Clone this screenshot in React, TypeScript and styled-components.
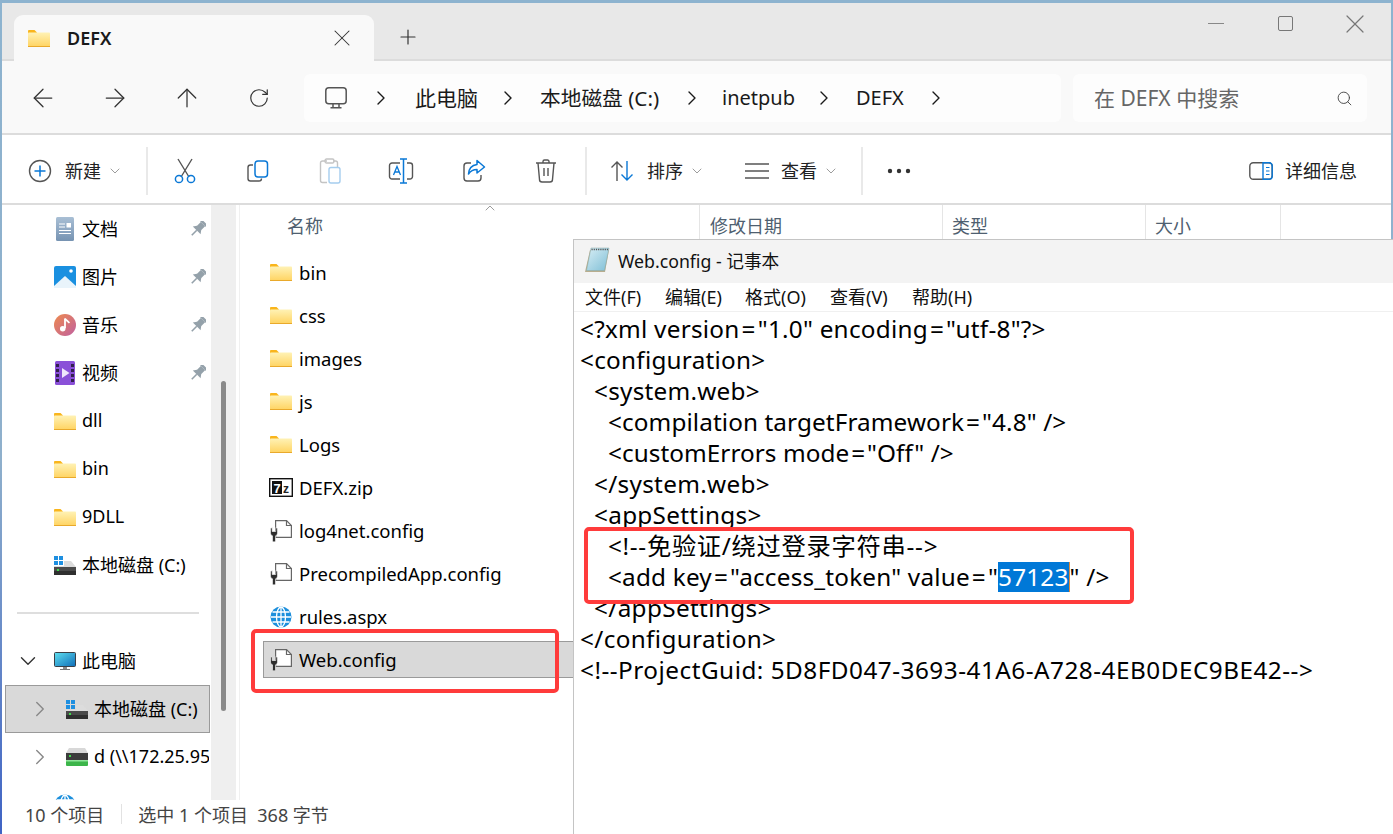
import React from "react";
import styled, { createGlobalStyle } from "styled-components";
import { ArrowLeft, ArrowRight, ArrowUp, RotateCw, ChevronRight, ChevronDown, ChevronUp, X, Plus, Search } from "lucide-react";

const GlobalStyle = createGlobalStyle`
  html, body { margin: 0; padding: 0; background: #fff; }
  body { font-family: "Noto Sans", "Noto Sans CJK SC", sans-serif; }
  * { box-sizing: border-box; }
`;

const Window = styled.div`
  position: relative;
  width: 1393px;
  height: 834px;
  overflow: hidden;
  padding: 3px 2px 0 2px;
  background: linear-gradient(180deg, #8db3cf 0%, #8fb0cc 55%, #3f63c4 100%);
`;
const Inner = styled.div`
  height: 831px;
  display: flex;
  flex-direction: column;
  background: #fff;
  color: #000;
`;
const TabBar = styled.div`
  height: 58px;
  flex: none;
  display: flex;
  align-items: flex-end;
  padding-left: 12px;
  background: #e8e8e8;
  border-bottom: 2px solid #dcdcdc;
`;
const Tab = styled.div`
  width: 360px;
  height: 46px;
  margin-bottom: -2px;
  display: flex;
  align-items: center;
  padding: 0 18px 0 14px;
  background: #f9f9f9;
  border-radius: 9px 9px 0 0;
  font-size: 18px;
  font-weight: 600;
  color: #1a1a1a;
`;
const TabTitle = styled.span`
  margin-left: 17px;
  flex: 1;
`;
const NewTab = styled.div`
  margin-left: 22px;
  height: 44px;
  display: flex;
  align-items: center;
  color: #333;
`;
const Caption = styled.div`
  margin-left: auto;
  height: 56px;
  display: flex;
  align-items: center;
  gap: 46px;
  padding: 0 20px 15px 0;
  color: #777;
`;
const MinLine = styled.div`
  width: 16px;
  height: 1px;
  margin-right: 8px;
  background: #888;
`;
const MaxBox = styled.div`
  width: 15px;
  height: 15px;
  border: 1.5px solid #777;
  border-radius: 2px;
`;
const AddressRow = styled.div`
  height: 74px;
  flex: none;
  display: flex;
  align-items: center;
  padding-top: 2px;
  background: #f9f9f9;
  border-bottom: 2px solid #dcdcdc;
  color: #333;
`;
const NavButtons = styled.div`
  width: 302px;
  display: flex;
  align-items: center;
  padding-left: 26px;
  gap: 42px;
`;
const AddressBox = styled.div`
  width: 757px;
  height: 48px;
  display: flex;
  align-items: center;
  padding-left: 21px;
  background: #fdfdfd;
  border-radius: 6px;
  color: #1a1a1a;
`;
const CrumbIcon = styled.span`
  width: 44px;
  flex: none;
  display: flex;
  align-items: center;
`;
const Crumb = styled.span<{ $w: number; $size?: number }>`
  width: ${(p) => p.$w}px;
  flex: none;
  padding-bottom: 2px;
  font-size: ${(p) => p.$size ?? 20}px;
  white-space: nowrap;
`;
const CrumbArrow = styled.span<{ $w: number }>`
  width: ${(p) => p.$w}px;
  flex: none;
  display: flex;
`;
const SearchBox = styled.div`
  width: 294px;
  height: 48px;
  margin-left: 12px;
  display: flex;
  align-items: center;
  justify-content: space-between;
  padding: 0 14px 0 21px;
  background: #fdfdfd;
  border-radius: 6px;
  font-size: 21px;
  color: #666;
`;
const SearchHint = styled.span`
  padding-bottom: 2px;
`;
const Toolbar = styled.div`
  height: 70px;
  flex: none;
  display: flex;
  align-items: center;
  padding-top: 4px;
  border-bottom: 2px solid #dcdcdc;
  font-size: 18px;
  color: #222;
`;
const ToolItem = styled.div<{ $w: number }>`
  width: ${(p) => p.$w}px;
  flex: none;
  display: flex;
  align-items: center;
`;
const IconSlot = styled.div<{ $w: number; $ml?: number }>`
  width: ${(p) => p.$w}px;
  margin-left: ${(p) => p.$ml ?? 0}px;
  flex: none;
  display: flex;
  justify-content: center;
`;
const ToolLabel = styled.span<{ $ml: number }>`
  margin-left: ${(p) => p.$ml}px;
  padding-bottom: 2px;
`;
const ToolSep = styled.div<{ $ml?: number }>`
  width: 2px;
  height: 48px;
  margin-left: ${(p) => p.$ml ?? 0}px;
  flex: none;
  background: #e9e9e9;
`;
const Caret = styled.span`
  margin-left: 6px;
  display: flex;
  color: #777;
`;
const Main = styled.div`
  flex: 1;
  min-height: 0;
  display: flex;
`;
const Sidebar = styled.div`
  width: 209px;
  flex: none;
  overflow: hidden;
  font-size: 18px;
`;
const SideRow = styled.div<{ $selected?: boolean }>`
  height: 48px;
  width: 205px;
  margin-left: 3px;
  display: flex;
  align-items: center;
  white-space: nowrap;
  overflow: hidden;
  background: ${(p) => (p.$selected ? "#d9d9d9" : "transparent")};
  border: 1px solid ${(p) => (p.$selected ? "#9a9a9a" : "transparent")};
`;
const ChevronSlot = styled.div<{ $depth: number }>`
  width: ${(p) => (p.$depth === 2 ? 60 : 48)}px;
  padding-left: ${(p) => (p.$depth === 2 ? 21 : 9)}px;
  flex: none;
  display: flex;
  color: #888;
`;
const SideIcon = styled.div`
  width: 22px;
  flex: none;
  display: flex;
  justify-content: center;
`;
const SideLabel = styled.span`
  margin-left: 6px;
  padding-bottom: 2px;
`;
const PinSlot = styled.div`
  margin-left: auto;
  padding-right: 3px;
  display: flex;
`;
const SideDivider = styled.div`
  height: 48px;
  display: flex;
  align-items: center;
  padding: 0 12px 0 15px;
  &::after {
    content: "";
    flex: 1;
    height: 2px;
    background: #dedede;
  }
`;
const ScrollTrack = styled.div`
  width: 25px;
  flex: none;
  padding: 176px 0 0 10px;
  background: #efefef;
`;
const ScrollThumb = styled.div`
  width: 5px;
  height: 330px;
  border-radius: 3px;
  background: #8a8a8a;
`;
const Content = styled.div`
  flex: 1;
  min-width: 0;
  margin-left: 3px;
  border-left: 1px solid #f0f0f0;
  overflow: hidden;
`;
const HeaderRow = styled.div`
  height: 35px;
  display: flex;
  font-size: 18px;
  color: #4f5f70;
`;
const HeaderCell = styled.div<{ $w: number; $pad: number }>`
  position: relative;
  width: ${(p) => p.$w}px;
  flex: none;
  padding-left: ${(p) => p.$pad}px;
  padding-top: 7px;
  border-right: 1px solid #e5e5e5;
`;
const SortMark = styled.div`
  position: absolute;
  left: 242px;
  top: -5px;
  display: flex;
  color: #777;
`;
const FileList = styled.div`
  display: flex;
  flex-direction: column;
  gap: 6px;
  padding: 14px 0 0 23px;
  font-size: 18.5px;
`;
const FileRow = styled.div<{ $selected?: boolean }>`
  height: 37px;
  display: flex;
  align-items: center;
  gap: 6px;
  padding-left: 5px;
  background: ${(p) => (p.$selected ? "#d9d9d9" : "transparent")};
  border: 1px solid ${(p) => (p.$selected ? "#9a9a9a" : "transparent")};
`;
const FileIcon = styled.div`
  width: 24px;
  flex: none;
  display: flex;
  justify-content: center;
`;
const StatusBar = styled.div`
  height: 34px;
  flex: none;
  display: flex;
  align-items: center;
  padding: 0 0 7px 23px;
  font-size: 18px;
  color: #444;
  white-space: pre;
`;
const StatusSep = styled.div`
  width: 1px;
  height: 20px;
  margin: 0 16px 0 17px;
  background: #e2e2e2;
`;
const Notepad = styled.div`
  position: absolute;
  left: 573px;
  top: 239px;
  width: 820px;
  height: 595px;
  display: flex;
  flex-direction: column;
  background: #fff;
  border-left: 1px solid #c4c4c4;
  border-top: 1px solid #c4c4c4;
`;
const NoteTitle = styled.div`
  height: 43px;
  flex: none;
  display: flex;
  align-items: center;
  gap: 8px;
  padding: 0 0 3px 10px;
  background: #f3f3f3;
  font-size: 17.7px;
  color: #111;
`;
const NoteMenu = styled.div`
  height: 29px;
  flex: none;
  display: flex;
  align-items: center;
  padding: 0 0 2px 11px;
  border-bottom: 1px solid #f0f0f0;
  font-size: 18px;
  color: #111;
`;
const MenuItem = styled.span<{ $w: number }>`
  width: ${(p) => p.$w}px;
  flex: none;
`;
const NoteBody = styled.div`
  padding: 1px 0 0 6px;
  font-size: 24.3px;
  line-height: 31px;
  color: #000;
`;
const CodeLine = styled.div<{ $indent?: number; $spacing?: number }>`
  height: 31px;
  padding-left: ${(p) => (p.$indent ?? 0) * 14}px;
  letter-spacing: ${(p) => p.$spacing ?? 0.3}px;
  white-space: pre;
`;
const Eq = styled.span`
  margin: 0 2px;
`;
const Selected = styled.span`
  display: inline-block;
  height: 30px;
  line-height: 30px;
  background: #0078d7;
  color: #fff;
  border-right: 1px solid #e08a3c;
`;
const RowHighlight = styled.div`
  position: absolute;
  left: 251px;
  top: 629px;
  width: 308px;
  height: 64px;
  border: 4px solid #ff3b3b;
  border-radius: 5px;
`;
const CodeHighlight = styled.div`
  position: absolute;
  left: 584px;
  top: 527px;
  width: 550px;
  height: 77px;
  border: 4px solid #ff3b3b;
  border-radius: 5px;
`;

function FolderIcon() {
  return (
    <svg width="22" height="17" viewBox="0 0 22 17">
      <defs>
        <linearGradient id="fold" x1="0" y1="0" x2="0" y2="1">
          <stop offset="0" stopColor="#fff2b5" />
          <stop offset="1" stopColor="#ffd360" />
        </linearGradient>
      </defs>
      <path d="M0 1.2C0 .5.5 0 1.2 0H6.5L9 2.5V5H0Z" fill="#f9b51c" />
      <rect x="0" y="2.5" width="22" height="14.5" rx="0.8" fill="url(#fold)" />
      <rect x="0" y="16" width="22" height="1" fill="#e9a92b" />
    </svg>
  );
}

function ConfigIcon() {
  return (
    <svg width="22" height="22" viewBox="0 0 22 22">
      <path d="M5.6 .6H16.5L21.4 5.5V17.4H5.6Z" fill="#fff" stroke="#666" strokeWidth="1.2" />
      <path d="M16.5 .6V5.5H21.4" fill="none" stroke="#666" strokeWidth="1.2" />
      <path
        d="M.5 8.5V13C.5 14.5 1.3 15.5 2.5 15.8V20.5A1.5 1.5 0 0 0 5.5 20.5V15.8C6.7 15.5 7.5 14.5 7.5 13V8.5L5.8 7.5V11.5H2.2V7.5Z"
        fill="#2e2e2e"
        stroke="#fff"
        strokeWidth="0.6"
      />
    </svg>
  );
}

function ZipIcon() {
  return (
    <svg width="24" height="19" viewBox="0 0 24 19">
      <rect x="0.7" y="0.7" width="22.6" height="17.6" fill="#fff" stroke="#111" strokeWidth="1.4" />
      <rect x="3" y="3" width="10" height="13" fill="#111" />
      <text x="4.5" y="14.5" fontSize="13" fontWeight="700" fontFamily="Liberation Sans" fill="#fff">7</text>
      <text x="14" y="15" fontSize="12" fontWeight="700" fontFamily="Liberation Sans" fill="#222">z</text>
    </svg>
  );
}

function GlobeIcon() {
  return (
    <svg width="22" height="22" viewBox="0 0 22 22">
      <circle cx="11" cy="11" r="10.5" fill="#1c8fdc" />
      <g fill="none" stroke="#fff" strokeWidth="1.3">
        <ellipse cx="11" cy="11" rx="4.5" ry="10" />
        <path d="M11 1V21M1 11H21M2.5 6H19.5M2.5 16H19.5" />
      </g>
    </svg>
  );
}

function DocsIcon() {
  return (
    <svg width="18" height="24" viewBox="0 0 18 24">
      <defs>
        <linearGradient id="docs" x1="0" y1="0" x2="0" y2="1">
          <stop offset="0" stopColor="#a9bfd5" />
          <stop offset="1" stopColor="#7693b2" />
        </linearGradient>
      </defs>
      <rect width="18" height="24" rx="1.5" fill="url(#docs)" />
      <path d="M3 7H9M3 10H9M3 13.5H15M3 16.5H15" stroke="#fff" strokeWidth="1" />
      <rect x="10.5" y="6" width="4.5" height="4.5" fill="#fff" />
    </svg>
  );
}

function PicturesIcon() {
  return (
    <svg width="22" height="22" viewBox="0 0 22 22">
      <rect width="22" height="22" rx="2" fill="#1a90e0" />
      <circle cx="17" cy="5" r="1.8" fill="#fff" />
      <path d="M0 20L11 10L22 20V22H0Z" fill="#e9f4fb" />
    </svg>
  );
}

function MusicIcon() {
  return (
    <svg width="24" height="24" viewBox="0 0 24 24">
      <defs>
        <linearGradient id="music" x1="0" y1="0" x2="1" y2="1">
          <stop offset="0" stopColor="#ee8a4e" />
          <stop offset="1" stopColor="#c060a0" />
        </linearGradient>
      </defs>
      <circle cx="12" cy="12" r="12" fill="url(#music)" />
      <path d="M12 5V15.5" stroke="#fff" strokeWidth="2" />
      <path d="M12 5C13 7.5 16 7.5 16.5 10" stroke="#fff" strokeWidth="2" fill="none" />
      <circle cx="9.5" cy="16" r="3" fill="#fff" />
    </svg>
  );
}

function VideoIcon() {
  return (
    <svg width="20" height="24" viewBox="0 0 20 24">
      <rect width="20" height="24" rx="1.5" fill="#8a50d8" />
      <rect x="1" y="3" width="3" height="3" fill="#33204f" />
      <rect x="1" y="8" width="3" height="3" fill="#33204f" />
      <rect x="1" y="13" width="3" height="3" fill="#33204f" />
      <rect x="1" y="18" width="3" height="3" fill="#33204f" />
      <rect x="16" y="3" width="3" height="3" fill="#33204f" />
      <rect x="16" y="8" width="3" height="3" fill="#33204f" />
      <rect x="16" y="13" width="3" height="3" fill="#33204f" />
      <rect x="16" y="18" width="3" height="3" fill="#33204f" />
      <path d="M7 7L14.5 12L7 17Z" fill="#efe6fb" />
    </svg>
  );
}

function DriveIcon() {
  return (
    <svg width="22" height="19" viewBox="0 0 22 19">
      <rect x="0" y="0" width="4" height="4" fill="#1e8fe0" />
      <rect x="5" y="0" width="4" height="4" fill="#1e8fe0" />
      <rect x="0" y="5" width="4" height="4" fill="#1e8fe0" />
      <rect x="5" y="5" width="4" height="4" fill="#1e8fe0" />
      <path d="M10 5H17L22 11H0V10H10Z" fill="#dcdcdc" />
      <rect x="0" y="11" width="22" height="8" fill="#4a4a4a" />
      <rect x="0" y="15" width="22" height="4" fill="#2f2f2f" />
      <rect x="3" y="13" width="2" height="2" fill="#3ddc4a" />
    </svg>
  );
}

function NetDriveIcon() {
  return (
    <svg width="22" height="18" viewBox="0 0 22 18">
      <path d="M3 0H19L22 5H0Z" fill="#d8d8d8" />
      <rect x="0" y="5" width="22" height="7" fill="#3c3c3c" />
      <rect x="3" y="7" width="2" height="2" fill="#3ddc4a" />
      <rect x="0" y="12" width="22" height="6" rx="1" fill="#3cb54a" />
      <rect x="0" y="12" width="22" height="1.5" fill="#8fe59a" />
    </svg>
  );
}

function PcIcon() {
  return (
    <svg width="22" height="18" viewBox="0 0 22 18">
      <defs>
        <linearGradient id="pc" x1="0" y1="0" x2="1" y2="1">
          <stop offset="0" stopColor="#5fe0f0" />
          <stop offset="1" stopColor="#0f6db8" />
        </linearGradient>
      </defs>
      <rect x="0.5" y="0.5" width="21" height="14" rx="1" fill="url(#pc)" stroke="#3a3f46" />
      <rect x="9" y="15" width="4" height="2" fill="#8a8a8a" />
      <rect x="6" y="17" width="10" height="1" fill="#777" />
    </svg>
  );
}

function PinIcon() {
  return (
    <svg width="16" height="16" viewBox="0 0 16 16">
      <g transform="rotate(45 8 8)" fill="#94a1aa">
        <rect x="4" y="-1.5" width="8" height="2.5" rx="0.6" />
        <rect x="5" y="1" width="6" height="6" />
        <path d="M5 6.5H11L13.5 9.8H2.5Z" />
        <rect x="7.2" y="9.8" width="1.6" height="7" />
      </g>
    </svg>
  );
}

function MonitorIcon() {
  return (
    <svg width="22" height="22" viewBox="0 0 22 22" fill="none" stroke="#555" strokeWidth="1.5">
      <rect x="0.8" y="0.8" width="20.4" height="16" rx="3" />
      <path d="M8 17V20.8M14 17V20.8M5.5 20.8H16.5" />
    </svg>
  );
}

function NewIcon() {
  return (
    <svg width="24" height="24" viewBox="0 0 24 24" fill="none">
      <circle cx="12" cy="12" r="10.5" stroke="#555" strokeWidth="1.4" />
      <path d="M12 6.5V17.5M6.5 12H17.5" stroke="#0a78d6" strokeWidth="1.5" />
    </svg>
  );
}

function CutIcon() {
  return (
    <svg width="24" height="26" viewBox="0 0 24 26" fill="none">
      <path d="M5 1L16 19M19 1L8 19" stroke="#555" strokeWidth="1.4" />
      <circle cx="6" cy="21" r="3.6" stroke="#0a78d6" strokeWidth="1.5" />
      <circle cx="18" cy="21" r="3.6" stroke="#0a78d6" strokeWidth="1.5" />
    </svg>
  );
}

function CopyIcon() {
  return (
    <svg width="24" height="24" viewBox="0 0 24 24" fill="none">
      <path d="M7 6H4.5A2.5 2.5 0 0 0 2 8.5V19.5A2.5 2.5 0 0 0 4.5 22H13A2.5 2.5 0 0 0 15.5 19.5" stroke="#555" strokeWidth="1.4" />
      <rect x="9" y="2" width="12.5" height="16" rx="3" stroke="#0a78d6" strokeWidth="1.5" />
    </svg>
  );
}

function PasteIcon() {
  return (
    <svg width="24" height="26" viewBox="0 0 24 26" fill="none">
      <path d="M9 3H4.5A2 2 0 0 0 2.5 5V22.5A2 2 0 0 0 4.5 24.5H9M15 3H17.5A2 2 0 0 1 19.5 5V9" stroke="#c4c4c4" strokeWidth="1.4" />
      <rect x="7" y="1" width="9" height="4" rx="1.5" stroke="#c4c4c4" strokeWidth="1.3" />
      <rect x="11" y="9.5" width="11" height="15.5" rx="2" stroke="#a5cdee" strokeWidth="1.4" />
    </svg>
  );
}

function RenameIcon() {
  return (
    <svg width="26" height="26" viewBox="0 0 26 26" fill="none">
      <path d="M12 5H4A2.5 2.5 0 0 0 1.5 7.5V18.5A2.5 2.5 0 0 0 4 21H12M19 5H22A2.5 2.5 0 0 1 24.5 7.5V18.5A2.5 2.5 0 0 1 22 21H19" stroke="#555" strokeWidth="1.4" />
      <path d="M5.5 17L9 8.5L12.5 17M6.8 14H11.2" stroke="#0a78d6" strokeWidth="1.3" />
      <path d="M12 1H19M12 25H19M15.5 1V25" stroke="#0a78d6" strokeWidth="1.5" />
    </svg>
  );
}

function ShareIcon() {
  return (
    <svg width="24" height="24" viewBox="0 0 24 24" fill="none">
      <path d="M9 4H5A3 3 0 0 0 2 7V19A3 3 0 0 0 5 22H16A3 3 0 0 0 19 19V16" stroke="#555" strokeWidth="1.4" />
      <path d="M15 1.5L22.5 8L15 14V10.5C11 10.5 8.5 12 6.5 15C6.8 10 10 6.2 15 5.5Z" stroke="#0a78d6" strokeWidth="1.5" strokeLinejoin="round" />
    </svg>
  );
}

function TrashIcon() {
  return (
    <svg width="22" height="24" viewBox="0 0 22 24" fill="none" stroke="#555" strokeWidth="1.4">
      <path d="M1 4H21M8 4V2.5A1.5 1.5 0 0 1 9.5 1H12.5A1.5 1.5 0 0 1 14 2.5V4" />
      <path d="M3 4L4.5 20.5A2.5 2.5 0 0 0 7 23H15A2.5 2.5 0 0 0 17.5 20.5L19 4" />
      <path d="M9 9V17M13 9V17" />
    </svg>
  );
}

function SortIcon() {
  return (
    <svg width="24" height="24" viewBox="0 0 24 24" fill="none" strokeWidth="1.4">
      <path d="M7 22V3M1.5 8.5L7 3L12.5 8.5" stroke="#555" />
      <path d="M17 2V21M11.5 15.5L17 21L22.5 15.5" stroke="#0a78d6" />
    </svg>
  );
}

function ViewIcon() {
  return (
    <svg width="24" height="18" viewBox="0 0 24 18" fill="none" stroke="#555" strokeWidth="1.5">
      <path d="M0 2H24M0 9H24M0 16H24" />
    </svg>
  );
}

function DotsIcon() {
  return (
    <svg width="24" height="6" viewBox="0 0 24 6" fill="#333">
      <circle cx="3" cy="3" r="2.2" />
      <circle cx="12" cy="3" r="2.2" />
      <circle cx="21" cy="3" r="2.2" />
    </svg>
  );
}

function DetailsIcon() {
  return (
    <svg width="24" height="18" viewBox="0 0 24 18" fill="none">
      <rect x="0.8" y="0.8" width="22.4" height="16.4" rx="3.5" stroke="#555" strokeWidth="1.4" />
      <path d="M14 0.8H20A3.2 3.2 0 0 1 23.2 4V14A3.2 3.2 0 0 1 20 17.2H14Z" stroke="#0a78d6" strokeWidth="1.4" />
      <path d="M17 5.5H20.5M17 9H20.5M17 12.5H20.5" stroke="#0a78d6" strokeWidth="1.2" />
    </svg>
  );
}

function NotepadIcon() {
  return (
    <svg width="26" height="26" viewBox="0 0 26 26">
      <defs>
        <linearGradient id="pad" x1="0" y1="0" x2="1" y2="1">
          <stop offset="0" stopColor="#d8eef5" />
          <stop offset="1" stopColor="#7fbfd6" />
        </linearGradient>
      </defs>
      <path d="M6 3H25L21 25H1Z" fill="#b8ad8e" />
      <path d="M7 1H25L20.5 23.5H2.5Z" fill="url(#pad)" stroke="#8aa" strokeWidth="0.5" />
      <path d="M7.5 2.5H24.5" stroke="#555" strokeWidth="1.6" strokeDasharray="1.2 1" />
    </svg>
  );
}

const sideItems = [
  { label: "文档", icon: <DocsIcon />, pin: true },
  { label: "图片", icon: <PicturesIcon />, pin: true },
  { label: "音乐", icon: <MusicIcon />, pin: true },
  { label: "视频", icon: <VideoIcon />, pin: true },
  { label: "dll", icon: <FolderIcon /> },
  { label: "bin", icon: <FolderIcon /> },
  { label: "9DLL", icon: <FolderIcon /> },
  { label: "本地磁盘 (C:)", icon: <DriveIcon /> },
];

const files = [
  { name: "bin", icon: <FolderIcon /> },
  { name: "css", icon: <FolderIcon /> },
  { name: "images", icon: <FolderIcon /> },
  { name: "js", icon: <FolderIcon /> },
  { name: "Logs", icon: <FolderIcon /> },
  { name: "DEFX.zip", icon: <ZipIcon /> },
  { name: "log4net.config", icon: <ConfigIcon /> },
  { name: "PrecompiledApp.config", icon: <ConfigIcon /> },
  { name: "rules.aspx", icon: <GlobeIcon /> },
  { name: "Web.config", icon: <ConfigIcon />, selected: true },
];

// the "=" sits wider in the notepad font than in ours
function withEq(text: string) {
  return text.split("=").map((part, i) => (
    <React.Fragment key={i}>
      {i > 0 && <Eq>=</Eq>}
      {part}
    </React.Fragment>
  ));
}

export default function App() {
  return (
    <>
      <GlobalStyle />
      <Window>
        <Inner>
          <TabBar>
            <Tab>
              <FolderIcon />
              <TabTitle>DEFX</TabTitle>
              <X size={28} strokeWidth={0.9} color="#333" />
            </Tab>
            <NewTab>
              <Plus size={24} strokeWidth={1.2} />
            </NewTab>
            <Caption>
              <MinLine />
              <MaxBox />
              <X size={32} strokeWidth={0.9} />
            </Caption>
          </TabBar>
          <AddressRow>
            <NavButtons>
              <ArrowLeft size={30} strokeWidth={1} />
              <ArrowRight size={30} strokeWidth={1} />
              <ArrowUp size={30} strokeWidth={1} />
              <IconSlot $w={30}><RotateCw size={22} strokeWidth={1.3} /></IconSlot>
            </NavButtons>
            <AddressBox>
              <CrumbIcon><MonitorIcon /></CrumbIcon>
              <CrumbArrow $w={46}><ChevronRight size={24} strokeWidth={1.4} /></CrumbArrow>
              <Crumb $w={81} $size={21}>此电脑</Crumb>
              <CrumbArrow $w={44}><ChevronRight size={24} strokeWidth={1.4} /></CrumbArrow>
              <Crumb $w={140} $size={20.7}>本地磁盘 (C:)</Crumb>
              <CrumbArrow $w={42}><ChevronRight size={24} strokeWidth={1.4} /></CrumbArrow>
              <Crumb $w={90}>inetpub</Crumb>
              <CrumbArrow $w={44}><ChevronRight size={24} strokeWidth={1.4} /></CrumbArrow>
              <Crumb $w={68}>DEFX</Crumb>
              <CrumbArrow $w={24}><ChevronRight size={24} strokeWidth={1.4} /></CrumbArrow>
            </AddressBox>
            <SearchBox>
              <SearchHint>在 DEFX 中搜索</SearchHint>
              <Search size={17} strokeWidth={1.3} color="#444" />
            </SearchBox>
          </AddressRow>
          <Toolbar>
            <ToolItem $w={144}>
              <IconSlot $w={24} $ml={26}><NewIcon /></IconSlot>
              <ToolLabel $ml={13}>新建</ToolLabel>
              <Caret><ChevronDown size={16} strokeWidth={1.1} /></Caret>
            </ToolItem>
            <ToolSep />
            <IconSlot $w={74}><CutIcon /></IconSlot>
            <IconSlot $w={72}><CopyIcon /></IconSlot>
            <IconSlot $w={72}><PasteIcon /></IconSlot>
            <IconSlot $w={70}><RenameIcon /></IconSlot>
            <IconSlot $w={76}><ShareIcon /></IconSlot>
            <IconSlot $w={68}><TrashIcon /></IconSlot>
            <ToolSep $ml={5} />
            <ToolItem $w={158}>
              <IconSlot $w={24} $ml={23}><SortIcon /></IconSlot>
              <ToolLabel $ml={13}>排序</ToolLabel>
              <Caret><ChevronDown size={16} strokeWidth={1.1} /></Caret>
            </ToolItem>
            <ToolItem $w={116}>
              <IconSlot $w={24}><ViewIcon /></IconSlot>
              <ToolLabel $ml={12}>查看</ToolLabel>
              <Caret><ChevronDown size={16} strokeWidth={1.1} /></Caret>
            </ToolItem>
            <ToolSep />
            <ToolItem $w={386}>
              <IconSlot $w={24} $ml={24}><DotsIcon /></IconSlot>
            </ToolItem>
            <IconSlot $w={24}><DetailsIcon /></IconSlot>
            <ToolLabel $ml={12}>详细信息</ToolLabel>
          </Toolbar>
          <Main>
            <Sidebar>
              {sideItems.map((item) => (
                <SideRow key={item.label}>
                  <ChevronSlot $depth={1} />
                  <SideIcon>{item.icon}</SideIcon>
                  <SideLabel>{item.label}</SideLabel>
                  {item.pin && <PinSlot><PinIcon /></PinSlot>}
                </SideRow>
              ))}
              <SideDivider />
              <SideRow>
                <ChevronSlot $depth={1}><ChevronDown size={26} strokeWidth={1.3} color="#333" /></ChevronSlot>
                <SideIcon><PcIcon /></SideIcon>
                <SideLabel>此电脑</SideLabel>
              </SideRow>
              <SideRow $selected>
                <ChevronSlot $depth={2}><ChevronRight size={26} strokeWidth={1.3} /></ChevronSlot>
                <SideIcon><DriveIcon /></SideIcon>
                <SideLabel>本地磁盘 (C:)</SideLabel>
              </SideRow>
              <SideRow>
                <ChevronSlot $depth={2}><ChevronRight size={26} strokeWidth={1.3} /></ChevronSlot>
                <SideIcon><NetDriveIcon /></SideIcon>
                <SideLabel>d (\\172.25.95.1)</SideLabel>
              </SideRow>
              <SideRow>
                <ChevronSlot $depth={1} />
                <SideIcon><GlobeIcon /></SideIcon>
              </SideRow>
            </Sidebar>
            <ScrollTrack><ScrollThumb /></ScrollTrack>
            <Content>
              <HeaderRow>
                <HeaderCell $w={460} $pad={47}>
                  名称
                  <SortMark><ChevronUp size={16} strokeWidth={1.1} /></SortMark>
                </HeaderCell>
                <HeaderCell $w={243} $pad={10}>修改日期</HeaderCell>
                <HeaderCell $w={203} $pad={9}>类型</HeaderCell>
                <HeaderCell $w={135} $pad={9}>大小</HeaderCell>
              </HeaderRow>
              <FileList>
                {files.map((file) => (
                  <FileRow key={file.name} $selected={file.selected}>
                    <FileIcon>{file.icon}</FileIcon>
                    <span>{file.name}</span>
                  </FileRow>
                ))}
              </FileList>
            </Content>
          </Main>
          <StatusBar>
            10 个项目
            <StatusSep />
            选中 1 个项目  368 字节
          </StatusBar>
        </Inner>
        <RowHighlight />
        <Notepad>
          <NoteTitle>
            <NotepadIcon />
            Web.config - 记事本
          </NoteTitle>
          <NoteMenu>
            <MenuItem $w={80}>文件(F)</MenuItem>
            <MenuItem $w={80}>编辑(E)</MenuItem>
            <MenuItem $w={85}>格式(O)</MenuItem>
            <MenuItem $w={82}>查看(V)</MenuItem>
            <MenuItem $w={80}>帮助(H)</MenuItem>
          </NoteMenu>
          <NoteBody>
            <CodeLine $spacing={0.25}>{withEq('<?xml version="1.0" encoding="utf-8"?>')}</CodeLine>
            <CodeLine $spacing={0.25}>{"<configuration>"}</CodeLine>
            <CodeLine $indent={1} $spacing={0.25}>{"<system.web>"}</CodeLine>
            <CodeLine $indent={2} $spacing={0.1}>{withEq('<compilation targetFramework="4.8" />')}</CodeLine>
            <CodeLine $indent={2} $spacing={0.05}>{withEq('<customErrors mode="Off" />')}</CodeLine>
            <CodeLine $indent={1}>{"</system.web>"}</CodeLine>
            <CodeLine $indent={1}>{"<appSettings>"}</CodeLine>
            <CodeLine $indent={2} $spacing={0.7}>{"<!--免验证/绕过登录字符串-->"}</CodeLine>
            <CodeLine $indent={2} $spacing={0.2}>
              {withEq('<add key="access_token" value="')}
              <Selected>57123</Selected>
              {'" />'}
            </CodeLine>
            <CodeLine $indent={1} $spacing={0.35}>{"</appSettings>"}</CodeLine>
            <CodeLine $spacing={0.35}>{"</configuration>"}</CodeLine>
            <CodeLine $spacing={0.5}>{"<!--ProjectGuid: 5D8FD047-3693-41A6-A728-4EB0DEC9BE42-->"}</CodeLine>
          </NoteBody>
        </Notepad>
        <CodeHighlight />
      </Window>
    </>
  );
}
